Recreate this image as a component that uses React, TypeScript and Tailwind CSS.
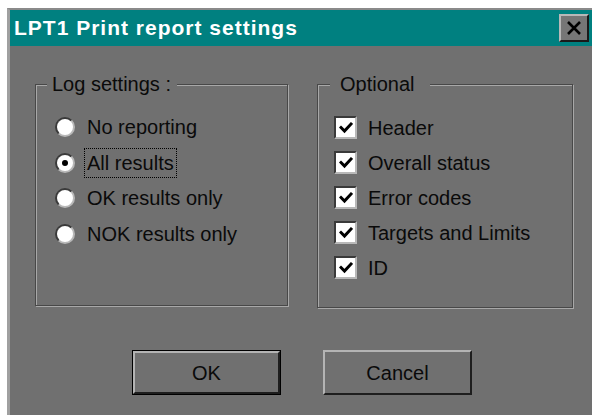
import React from "react";

const FONT = { fontFamily: '"Liberation Sans", Arial, sans-serif' };

const LOG_OPTIONS = ["No reporting", "All results", "OK results only", "NOK results only"];
const OPTIONAL = ["Header", "Overall status", "Error codes", "Targets and Limits", "ID"];

function Radio({ checked }: { checked?: boolean }) {
    return (
        <div className="w-[20px] h-[20px] rounded-full bg-white border-2 border-t-[#3a3a3a] border-l-[#3a3a3a] border-b-[#b8b8b8] border-r-[#b8b8b8] flex items-center justify-center shrink-0">
            {checked && <div className="w-[6px] h-[6px] rounded-full bg-black" />}
        </div>
    );
}

function CheckBox() {
    return (
        <div className="w-[23px] h-[23px] bg-white border-2 border-t-[#3a3a3a] border-l-[#3a3a3a] border-b-[#b8b8b8] border-r-[#b8b8b8] flex items-center justify-center shrink-0">
            <svg width="14" height="14" viewBox="0 0 14 14">
                <path d="M2 6.5 L5.5 10 L12 3" fill="none" stroke="#000" strokeWidth={3} strokeLinecap="square" />
            </svg>
        </div>
    );
}

function GroupBox({ label, className, labelClass, children }: { label: string; className: string; labelClass: string; children: React.ReactNode }) {
    return (
        <div className={`relative border border-[#484848] shadow-[1px_1px_0_#a8a8a8,inset_1px_1px_0_#a8a8a8] ${className}`}>
            {/* caption sits on top of the frame line */}
            <span className={`absolute -top-[13px] bg-[#707070] text-[20px] leading-[24px] text-[#0a0a0a] ${labelClass}`}>
                {label}
            </span>
            {children}
        </div>
    );
}

function Button({ label, isDefault }: { label: string; isDefault?: boolean }) {
    return (
        <div className={`w-[149px] h-[45px] ${isDefault ? "border border-black" : ""}`}>
            <div className="w-full h-full border-2 border-t-[#b4b4b4] border-l-[#b4b4b4] border-b-[#1e1e1e] border-r-[#1e1e1e] flex items-center justify-center text-[20px] text-[#0a0a0a]">
                {label}
            </div>
        </div>
    );
}

export default function App() {
    return (
        <div className="w-[592px] h-[415px] bg-white pl-[7px] pt-[8px] overflow-hidden" style={FONT}>
            <div className="h-[420px] flex flex-col bg-[#707070] border-l-[3px] border-t-2 border-l-[#a0a0a0] border-t-[#8a8a8a]">
                {/* Title bar */}
                <div className="h-[36px] bg-[#008080] flex items-center justify-between pl-[4px] pr-[3px]">
                    <span className="text-white font-bold text-[21px] tracking-[1px]">LPT1 Print report settings</span>
                    <div className="w-[30px] h-[28px] bg-[#767676] border-2 border-t-[#b8b8b8] border-l-[#b8b8b8] border-b-[#1a1a1a] border-r-[#1a1a1a] flex items-center justify-center">
                        <svg width="16" height="14" viewBox="0 0 16 14">
                            <path d="M2 1 L14 13 M14 1 L2 13" stroke="#000" strokeWidth={2.6} />
                        </svg>
                    </div>
                </div>

                {/* Body */}
                <div className="flex gap-[29px] pl-[25px] pt-[38px]">
                    <GroupBox label="Log settings :" labelClass="left-[11px] pl-[5px] pr-[6px]" className="w-[253px] h-[222px]">
                        <div className="flex flex-col gap-[15.5px] pl-[19px] pt-[32px]">
                            {LOG_OPTIONS.map((opt, i) => (
                                <div key={opt} className="flex items-center gap-[12px] h-[20px] text-[20px] text-[#0a0a0a]">
                                    <Radio checked={i === 1} />
                                    <span className={i === 1 ? "h-[30px] flex items-center border border-dotted border-black px-[2px] -ml-[3px]" : ""}>
                                        {opt}
                                    </span>
                                </div>
                            ))}
                        </div>
                    </GroupBox>
                    <GroupBox label="Optional" labelClass="left-[12px] pl-[10px] pr-[15px]" className="w-[256px] h-[224px]">
                        <div className="flex flex-col gap-[12px] pl-[16px] pt-[31px]">
                            {OPTIONAL.map(opt => (
                                <div key={opt} className="flex items-center gap-[11px] h-[23px] text-[20px] text-[#0a0a0a]">
                                    <CheckBox />
                                    <span>{opt}</span>
                                </div>
                            ))}
                        </div>
                    </GroupBox>
                </div>

                <div className="flex gap-[42px] pl-[122px] pt-[42px]">
                    <Button label="OK" isDefault />
                    <Button label="Cancel" />
                </div>
            </div>
        </div>
    );
}
